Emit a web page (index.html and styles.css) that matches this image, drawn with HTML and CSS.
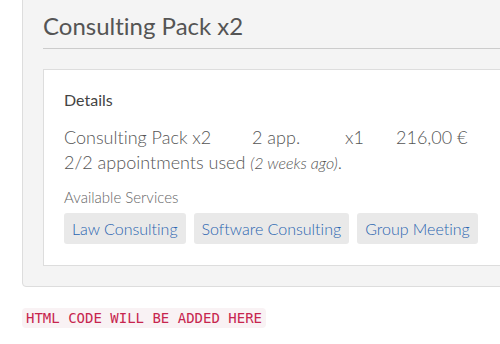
FILE: index.html
```html
<!DOCTYPE html>
<html lang="en">
<head>
    <meta charset="UTF-8">
    <meta name="viewport" content="width=device-width, initial-scale=1.0">
    <title>Consulting Pack x2</title>
    <link rel="stylesheet" href="styles.css">
</head>
<body>
    <div class="well">
        <h3 class="pack-title">Consulting Pack x2</h3>
        <div class="panel">
            <h4>Details</h4>
            <div class="pack-row">
                <span class="col-name">Consulting Pack x2</span>
                <span class="col-app">2 app.</span>
                <span class="col-qty">x1</span>
                <span class="col-price">216,00 €</span>
            </div>
            <p class="usage">2/2 appointments used <em>(2 weeks ago)</em>.</p>
            <p class="services-label">Available Services</p>
            <div class="tags">
                <a href="#" class="tag">Law Consulting</a>
                <a href="#" class="tag">Software Consulting</a>
                <a href="#" class="tag">Group Meeting</a>
            </div>
        </div>
    </div>
    <code class="placeholder">HTML CODE WILL BE ADDED HERE</code>
</body>
</html>
```

FILE: styles.css
```css
body {
    font-family: 'Lato', sans-serif;
    font-variant-ligatures: none;
    color: #555;
    margin: 0;
    padding: 0 0 0 22px;
    overflow: hidden;
    background: #fff;
}
.well {
    width: 560px;
    margin-top: -20px;
    background: #f4f4f4;
    border: 1px solid #ddd;
    border-radius: 4px;
    padding: 20px;
}
.pack-title {
    font-size: 24px;
    font-weight: 400;
    color: #555;
    margin: 0;
    padding: 13px 0 10px;
    border-bottom: 1px solid #ccc;
    line-height: 24px;
}
.panel {
    margin-top: 20px;
    background: #fff;
    border: 1px solid #ddd;
    padding: 18px 20px 21px;
}
.panel h4 {
    font-size: 16px;
    font-weight: 400;
    color: #444;
    margin: 0 0 13px;
    line-height: 24px;
}
.pack-row {
    display: flex;
    font-size: 18px;
    font-weight: 300;
    line-height: 25px;
}
.col-name {
    width: 188px;
}
.col-app {
    width: 93px;
}
.col-qty {
    width: 51px;
}
.usage {
    font-size: 18px;
    font-weight: 300;
    line-height: 25px;
    margin: 0;
}
.usage em {
    font-size: 16px;
}
.services-label {
    font-size: 15px;
    font-weight: 300;
    color: #666;
    margin: 12px 0 6px;
    line-height: 20px;
}
.tags {
    display: flex;
    gap: 8px;
}
.tag {
    background: #e9e9e9;
    color: #2a65b0;
    text-decoration: none;
    font-size: 16px;
    font-weight: 300;
    padding: 0 8px;
    line-height: 31px;
    border-radius: 3px;
}
.placeholder {
    display: inline-block;
    margin-top: 21px;
    font-family: 'DejaVu Sans Mono', monospace;
    font-size: 14px;
    line-height: 18px;
    color: #c7254e;
    background: #f9f2f4;
    padding: 1px 4px;
    border-radius: 4px;
}
```
